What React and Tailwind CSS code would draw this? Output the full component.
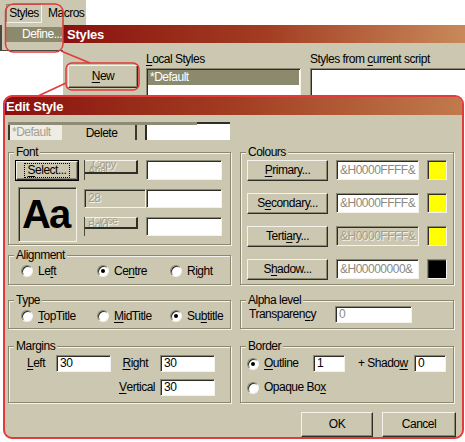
import React from "react";

const U = ({ children }) => <span className="underline underline-offset-2">{children}</span>;

function Btn({ children, className = "" }) {
  return (
    <div
      className={`flex items-center justify-center whitespace-nowrap border border-t-[#f4f2ea] border-l-[#f4f2ea] border-r-[#2e2d26] border-b-[#2e2d26] bg-[#cbc7b1] shadow-[inset_-1px_-1px_0_#8a8772] ${className}`}
    >
      {children}
    </div>
  );
}

function Field({ children, className = "" }) {
  return (
    <div
      className={`flex items-center overflow-hidden whitespace-nowrap border border-t-[#8a8772] border-l-[#8a8772] border-r-[#f4f2ea] border-b-[#f4f2ea] pl-[3px] shadow-[inset_1px_1px_0_#2e2d26] ${className}`}
    >
      {children}
    </div>
  );
}

function Group({ title, className = "", children }) {
  return (
    <div className={`relative border border-[#8a8772] shadow-[inset_1px_1px_0_#f4f2ea,1px_1px_0_#f4f2ea] ${className}`}>
      <span className="absolute -top-[8px] left-[5px] bg-[#cbc7b1] px-[2px] leading-[15px]">{title}</span>
      {children}
    </div>
  );
}

function Radio({ checked, children }) {
  return (
    <div className="flex items-center gap-[5px] whitespace-nowrap">
      <span className="flex h-[12px] w-[12px] shrink-0 items-center justify-center rounded-full border border-t-[#8a8772] border-l-[#8a8772] border-r-[#f4f2ea] border-b-[#f4f2ea] bg-white shadow-[inset_1px_1px_0_#2e2d26]">
        {checked && <span className="h-[4px] w-[4px] rounded-full bg-black" />}
      </span>
      <span>{children}</span>
    </div>
  );
}

const colours = [
  { label: <><U>P</U>rimary...</>, value: "&H0000FFFF&", swatch: "bg-[#ffff00]", off: false },
  { label: <>S<U>e</U>condary...</>, value: "&H0000FFFF&", swatch: "bg-[#ffff00]", off: false },
  { label: <>Terti<U>a</U>ry...</>, value: "&H0000FFFF&", swatch: "bg-[#ffff00]", off: true },
  { label: <>S<U>h</U>adow...</>, value: "&H00000000&", swatch: "bg-black", off: false },
];

export default function App() {
  return (
    <div className="relative h-[442px] w-[465px] overflow-hidden bg-white font-['Liberation_Sans',Arial,sans-serif] text-[12px] leading-[15px] tracking-[-0.5px] text-black">
      {/* menu bar */}
      <div className="absolute left-0 top-0 flex h-[25px] w-[87px] items-start gap-[6px] border-r border-white bg-[#cbc7b1] pl-[6px] pt-[4px]">
        <div className="flex h-[19px] w-[36px] items-center justify-center border border-t-[#8a8772] border-l-[#8a8772] border-r-[#f4f2ea] border-b-[#f4f2ea]">
          Styles
        </div>
        <div className="flex h-[19px] items-center">Macros</div>
      </div>
      {/* dropdown */}
      <div className="absolute left-0 top-[25px] h-[26px] w-[63px] border-b border-l-2 border-[#4a493f] bg-[#cbc7b1] pl-[4px] pt-[2px]">
        <div className="flex h-[15px] w-[56px] items-center bg-[#8c8a6c] pl-[16px] text-white">Define...</div>
      </div>

      {/* Styles dialog behind */}
      <div className="absolute left-[63px] right-0 top-[25px] h-[70px] bg-[#cbc7b1]">
        <div className="flex h-[18px] items-center bg-linear-to-r from-[#8a0e0e] via-[#a23c22] to-[#c8895a] pl-[4px] text-[13px] font-bold tracking-[-0.2px] text-white">
          Styles
        </div>
        <div className="flex pl-[5px]">
          <Btn className="mt-[22px] h-[23px] w-[70px] shrink-0">
            <span>
              <U>N</U>ew
            </span>
          </Btn>
          <div className="ml-[8px] w-[155px] shrink-0 pt-[9px]">
            <div>
              <U>L</U>ocal Styles
            </div>
            <div className="mt-[1px] h-[30px] border border-t-[#8a8772] border-l-[#8a8772] border-r-[#f4f2ea] border-b-[#f4f2ea] bg-white p-[1px] shadow-[inset_1px_1px_0_#2e2d26]">
              <div className="h-[15px] bg-[#8c8a6c] pl-[2px] text-white">*Default</div>
            </div>
          </div>
          <div className="ml-[9px] flex-1 pt-[9px]">
            <div>
              Styles from <U>c</U>urrent script
            </div>
            <div className="mt-[1px] h-[30px] border border-t-[#8a8772] border-l-[#8a8772] border-r-0 border-b-[#f4f2ea] bg-white shadow-[inset_1px_1px_0_#2e2d26]" />
          </div>
        </div>
      </div>

      {/* Edit Style dialog */}
      <div className="absolute left-[3px] top-[95px] flex h-[344px] w-[461px] flex-col overflow-hidden rounded-[9px] border-2 border-[#e23b3b] bg-[#cbc7b1]">
        <div className="flex h-[18px] shrink-0 items-center bg-linear-to-r from-[#8a0e0e] via-[#a23c22] to-[#c07a4c] pl-[1px] text-[13px] font-bold tracking-[-0.2px] text-white">
          Edit Style
        </div>
        <div className="flex flex-1 flex-col pl-[3px] pr-[8px]">
          {/* glitched top row */}
          <div className="relative mt-[7px] flex h-[18px] w-[222px] shrink-0">
            <div className="flex h-full w-[54px] items-end border-l-2 border-[#3a3930] bg-[#efece4] pl-[2px] text-[#a29f8f]">
              *Default
            </div>
            <div className="ml-[6px] flex h-full w-[69px] items-end justify-center overflow-hidden border-r-2 border-[#3a3930] leading-[13px]">
              Delete
            </div>
            <div className="ml-[8px] h-full flex-1 border-l-2 border-t-2 border-[#2e2d26] bg-white" />
            <div className="absolute left-0 top-0 h-[3px] w-[189px] bg-[#8d8a76]" />
          </div>

          {/* row 1 */}
          <div className="mt-[12px] flex gap-[9px]">
            <div className="flex w-[223px] flex-col gap-[10px]">
              <Group title="Font" className="h-[93px]">
                <div className="flex gap-[5px] pl-[6px] pt-[7px]">
                  <div className="flex w-[64px] flex-col">
                    <div className="h-[21px] border border-black">
                      <Btn className="h-full w-full">
                        <span className="border border-dotted border-black px-[3px] leading-[13px]">
                          <U>S</U>elect...
                        </span>
                      </Btn>
                    </div>
                    <Field className="ml-[3px] mt-[6px] h-[55px] w-[59px] bg-[#cbc7b1] pb-[2px] text-[40px] font-bold leading-[42px] tracking-[-2px]">
                      Aa
                    </Field>
                  </div>
                  <div className="flex w-[138px] flex-col gap-[9px]">
                    <div className="flex h-[20px]">
                      <div className="h-full w-[62px] border-l border-[#4a493f]">
                        <div className="flex h-[14px] w-[53px] flex-col overflow-hidden border-b-2 border-r-2 border-t border-b-[#2e2d26] border-r-[#2e2d26] border-t-[#f4f2ea] pl-[3px] text-[11px] leading-[6px] text-[#a19e8c] [text-shadow:1px_1px_0_#f4f2ea]">
                          <span className="pl-[4px]">Copy</span>
                          <span>Arial</span>
                        </div>
                      </div>
                      <Field className="h-full w-[76px] bg-white" />
                    </div>
                    <div className="flex h-[19px]">
                      <Field className="h-full w-[62px] bg-[#cbc7b1] text-[#a19e8c] [text-shadow:1px_1px_0_#f4f2ea]">28</Field>
                      <Field className="h-full w-[76px] bg-white" />
                    </div>
                    <div className="flex h-[19px]">
                      <div className="h-full w-[62px] border-l border-[#4a493f]">
                        <div className="flex h-[12px] w-[53px] flex-col overflow-hidden border-b-2 border-r-2 border-t border-b-[#2e2d26] border-r-[#2e2d26] border-t-[#f4f2ea] pl-[3px] text-[11px] leading-[5px] text-[#a19e8c] [text-shadow:1px_1px_0_#f4f2ea]">
                          <span className="pl-[4px]">Close</span>
                          <span>Bold</span>
                        </div>
                      </div>
                      <Field className="h-full w-[76px] bg-white" />
                    </div>
                  </div>
                </div>
              </Group>
              <Group title="Alignment" className="h-[30px]">
                <div className="grid h-full grid-cols-[76px_73px_1fr] items-center pl-[12px] pt-[2px]">
                  <Radio>
                    Le<U>f</U>t
                  </Radio>
                  <Radio checked>
                    Ce<U>n</U>tre
                  </Radio>
                  <Radio>
                    Ri<U>g</U>ht
                  </Radio>
                </div>
              </Group>
            </div>
            <Group title="Colours" className="h-[133px] w-[214px]">
              <div className="flex flex-col gap-[12px] pl-[6px] pt-[7px]">
                {colours.map((c, i) => (
                  <div key={i} className="flex h-[21px] gap-[8px]">
                    <Btn className="h-full w-[81px]">
                      <span>{c.label}</span>
                    </Btn>
                    <Field
                      className={`h-[20px] w-[83px] ${
                        c.off
                          ? "bg-[#cbc7b1] text-[#a19e8c] [text-shadow:1px_1px_0_#f4f2ea]"
                          : "bg-white text-[#8c8a80]"
                      }`}
                    >
                      {c.value}
                    </Field>
                    <div
                      className={`h-[20px] w-[20px] border border-t-[#8a8772] border-l-[#8a8772] border-r-[#f4f2ea] border-b-[#f4f2ea] shadow-[inset_1px_1px_0_#2e2d26] ${c.swatch}`}
                    />
                  </div>
                ))}
              </div>
            </Group>
          </div>

          {/* row 2 */}
          <div className="mt-[15px] flex gap-[9px]">
            <Group title="Type" className="h-[29px] w-[223px]">
              <div className="grid h-full grid-cols-[76px_73px_1fr] items-center pl-[12px] pt-[3px]">
                <Radio>
                  <U>T</U>opTitle
                </Radio>
                <Radio>
                  <U>M</U>idTitle
                </Radio>
                <Radio checked>
                  Su<U>b</U>title
                </Radio>
              </div>
            </Group>
            <Group title="Alpha level" className="h-[29px] w-[214px]">
              <div className="flex items-center pl-[8px] pt-[5px]">
                <div className="w-[86px]">
                  Transparen<U>c</U>y
                </div>
                <Field className="h-[17px] w-[77px] bg-white text-[#8c8a80]">0</Field>
              </div>
            </Group>
          </div>

          {/* row 3 */}
          <div className="mt-[17px] flex gap-[9px]">
            <Group title="Margins" className="h-[57px] w-[223px]">
              <div className="grid grid-cols-[47px_55px_49px_55px] gap-y-[7px] pt-[8px]">
                <div className="flex h-[17px] items-center justify-end pr-[11px]">
                  <U>L</U>eft
                </div>
                <Field className="h-[17px] bg-white">30</Field>
                <div className="flex h-[17px] items-center justify-end pr-[12px]">
                  <U>R</U>ight
                </div>
                <Field className="h-[17px] bg-white">30</Field>
                <div />
                <div />
                <div className="flex h-[17px] items-center justify-end pr-[5px]">
                  <U>V</U>ertical
                </div>
                <Field className="h-[17px] bg-white">30</Field>
              </div>
            </Group>
            <Group title="Border" className="h-[57px] w-[214px]">
              <div className="flex flex-col gap-[7px] pl-[6px] pt-[8px]">
                <div className="flex h-[17px] items-center">
                  <div className="w-[66px]">
                    <Radio checked>
                      <U>O</U>utline
                    </Radio>
                  </div>
                  <Field className="h-[17px] w-[32px] bg-white">1</Field>
                  <div className="w-[69px] whitespace-nowrap pl-[13px]">
                    + Shado<U>w</U>
                  </div>
                  <Field className="h-[17px] w-[32px] bg-white">0</Field>
                </div>
                <div className="flex h-[17px] items-center">
                  <Radio>
                    Opaque Bo<U>x</U>
                  </Radio>
                </div>
              </div>
            </Group>
          </div>

          {/* buttons */}
          <div className="-mr-[2px] mt-[9px] flex justify-end gap-[9px]">
            <Btn className="h-[25px] w-[72px]">OK</Btn>
            <Btn className="h-[25px] w-[74px]">Cancel</Btn>
          </div>
        </div>
      </div>

      {/* red annotations */}
      <svg
        className="pointer-events-none absolute inset-0"
        width="465"
        height="442"
        viewBox="0 0 465 442"
        fill="none"
        stroke="#e03a3a"
        strokeWidth="1.5"
      >
        <rect x="5.5" y="4" width="57.5" height="48" rx="8" />
        <rect x="66" y="63" width="73" height="27" rx="6" />
        <line x1="61" y1="51" x2="90" y2="63" />
        <line x1="66" y1="83" x2="38" y2="96" />
      </svg>
    </div>
  );
}
